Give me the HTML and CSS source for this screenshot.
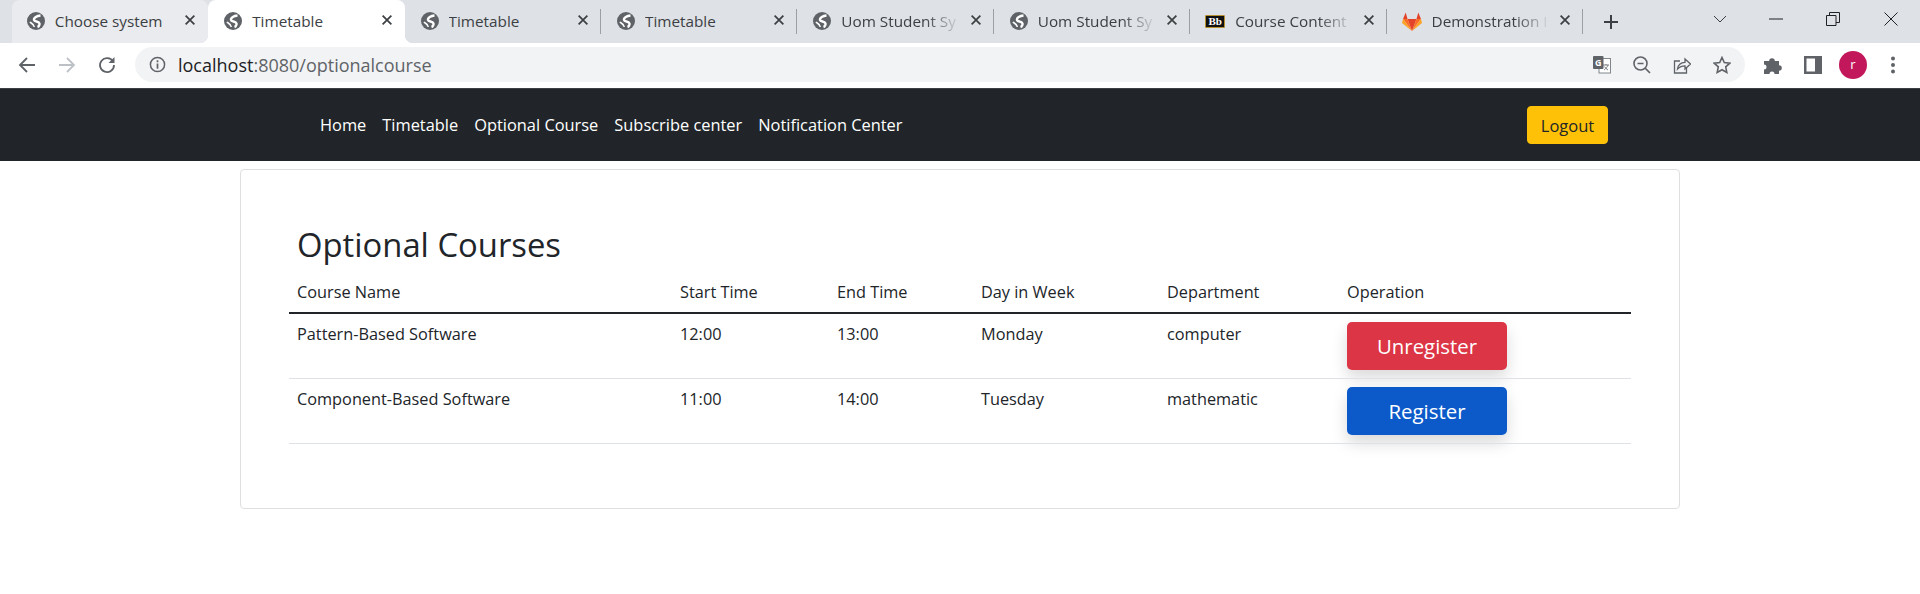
FILE: index.html
```html
<!DOCTYPE html>
<html lang="en">
<head>
    <meta charset="UTF-8">
    <meta name="viewport" content="width=device-width, initial-scale=1.0">
    <title>Timetable</title>
    <link rel="stylesheet" href="styles.css">
</head>
<body>
    <svg class="defs" width="0" height="0">
        <symbol id="globe" viewBox="0 0 18 18">
            <circle cx="9" cy="9" r="9" fill="#5f6368"/>
            <path d="M13.500 3.500C10 3.800 6.500 5.500 7 8c.4 2 5 1 5.500 3.500.2 1-.5 3-2 3.500" stroke="#fff" stroke-width="2.400" fill="none"/>
            <path d="M2.800 10c1.500 1 4 2 4.500 5" stroke="#fff" stroke-width="1.500" fill="none"/>
        </symbol>
        <symbol id="close" viewBox="0 0 16 16">
            <path d="M3 3l10 10M13 3L3 13" stroke="#3c4043" stroke-width="2" fill="none"/>
        </symbol>
    </svg>

    <div class="tab-strip">
        <div class="tab tab-hover">
            <svg class="tab-icon"><use href="#globe"/></svg>
            <span class="tab-title">Choose system</span>
            <svg class="tab-close"><use href="#close"/></svg>
        </div>
        <div class="tab tab-active">
            <svg class="tab-icon"><use href="#globe"/></svg>
            <span class="tab-title">Timetable</span>
            <svg class="tab-close"><use href="#close"/></svg>
        </div>
        <div class="tab tab-sep">
            <svg class="tab-icon"><use href="#globe"/></svg>
            <span class="tab-title">Timetable</span>
            <svg class="tab-close"><use href="#close"/></svg>
        </div>
        <div class="tab tab-sep">
            <svg class="tab-icon"><use href="#globe"/></svg>
            <span class="tab-title">Timetable</span>
            <svg class="tab-close"><use href="#close"/></svg>
        </div>
        <div class="tab tab-sep">
            <svg class="tab-icon"><use href="#globe"/></svg>
            <span class="tab-title tab-fade">Uom Student Sy</span>
            <svg class="tab-close"><use href="#close"/></svg>
        </div>
        <div class="tab tab-sep">
            <svg class="tab-icon"><use href="#globe"/></svg>
            <span class="tab-title tab-fade">Uom Student Sy</span>
            <svg class="tab-close"><use href="#close"/></svg>
        </div>
        <div class="tab tab-sep">
            <span class="bb-icon">Bb</span>
            <span class="tab-title tab-fade">Course Content</span>
            <svg class="tab-close"><use href="#close"/></svg>
        </div>
        <div class="tab tab-sep">
            <svg class="tab-icon fox-icon" viewBox="0 0 20 19">
                <path d="M10 19L5.500 7h9z" fill="#e24329"/>
                <path d="M10 19L5.500 7H1z" fill="#fc6d26"/>
                <path d="M10 19l4.500-12H19z" fill="#fc6d26"/>
                <path d="M10 19L1 7l-1 4z" fill="#fca326"/>
                <path d="M10 19l9-12 1 4z" fill="#fca326"/>
                <path d="M1 7l2.700-6.500L5.500 7z" fill="#e24329"/>
                <path d="M19 7L16.300.5 14.500 7z" fill="#e24329"/>
            </svg>
            <span class="tab-title tab-fade">Demonstration I</span>
            <svg class="tab-close"><use href="#close"/></svg>
        </div>
        <svg class="new-tab" viewBox="0 0 16 16"><path d="M8 1v14M1 8h14" stroke="#3c4043" stroke-width="2"/></svg>
        <div class="window-controls">
            <svg class="tab-list" viewBox="0 0 14 8"><path d="M1 1l6 6 6-6" stroke="#3c4043" fill="none"/></svg>
            <div class="win-btn"><svg viewBox="0 0 14 14"><path d="M0 7h14" stroke="#202124"/></svg></div>
            <div class="win-btn"><svg viewBox="0 0 14 14"><path d="M.5 3.500h9.500v10H.5zM3.500 3.500V.5h10v10H10" stroke="#202124" fill="none"/></svg></div>
            <div class="win-btn"><svg viewBox="0 0 14 14"><path d="M.5.5l13 13M13.500.5l-13 13" stroke="#202124" fill="none"/></svg></div>
        </div>
    </div>

    <div class="toolbar">
        <div class="tool-btn"><svg viewBox="0 0 18 18"><path d="M17 9H2M9 2L2 9l7 7" stroke="#5f6368" stroke-width="1.800" fill="none"/></svg></div>
        <div class="tool-btn"><svg viewBox="0 0 18 18"><path d="M1 9h15M9 2l7 7-7 7" stroke="#bdc1c6" stroke-width="1.800" fill="none"/></svg></div>
        <div class="tool-btn"><svg viewBox="0 0 18 18"><path d="M15 5.500A7 7 0 1 0 16 9" stroke="#5f6368" stroke-width="1.800" fill="none"/><path d="M16.500 1v6h-6z" fill="#5f6368"/></svg></div>
        <div class="omnibox">
            <svg class="info-icon" viewBox="0 0 18 18">
                <circle cx="9" cy="9" r="7.500" stroke="#5f6368" stroke-width="1.600" fill="none"/>
                <path d="M9 8v5.500M9 4.500v2" stroke="#5f6368" stroke-width="1.800"/>
            </svg>
            <div class="url"><span class="url-host">localhost</span>:8080/optionalcourse</div>
            <div class="omni-actions">
                <div class="tool-btn">
                    <svg viewBox="0 0 18 18">
                        <rect x="6" y="2.500" width="11.500" height="14.500" fill="#fff" stroke="#80868b"/>
                        <rect x="0" y="0" width="10.500" height="13" rx="1" fill="#5f6368"/>
                        <text x="5.200" y="10" class="g-letter">G</text>
                        <path d="M10 9h6M13 8v1M15 9c-.5 2-2.500 4-4 5M11.500 10.500c.8 1.500 2 2.500 3.500 3.500" stroke="#5f6368" stroke-width=".8" fill="none"/>
                    </svg>
                </div>
                <div class="tool-btn">
                    <svg viewBox="0 0 18 18">
                        <circle cx="7.500" cy="7.500" r="6.500" stroke="#5f6368" stroke-width="1.600" fill="none"/>
                        <path d="M4.500 7.500h6M12 12l5 5" stroke="#5f6368" stroke-width="1.700" fill="none"/>
                    </svg>
                </div>
                <div class="tool-btn">
                    <svg viewBox="0 0 18 18">
                        <path d="M7 5H1.500v12h12v-5" stroke="#5f6368" stroke-width="1.300" fill="none"/>
                        <path d="M4.500 13c.5-4 3-6.500 7.500-6.700V3l5.500 5-5.500 5V9.800c-3 0-5.500 1-7.500 3.200z" stroke="#5f6368" stroke-width="1.300" fill="none"/>
                    </svg>
                </div>
                <div class="tool-btn">
                    <svg viewBox="0 0 18 18">
                        <path d="M9 1.500l2.300 5.100 5.500.6-4.100 3.700 1.100 5.500L9 13.700l-4.800 2.700 1.100-5.500L1.200 7.200l5.500-.6z" stroke="#5f6368" stroke-width="1.600" fill="none"/>
                    </svg>
                </div>
            </div>
        </div>
        <div class="tool-btn tool-first">
            <svg class="puzzle-icon" viewBox="0 0 20 20"><path d="M1 6h5.200a2.800 2.800 0 1 1 5.600 0H16v4.200a2.800 2.800 0 1 1 0 5.600V19h-4.500a2.500 2.500 0 1 0-5 0H1v-4.500a2.500 2.500 0 1 0 0-5z" fill="#5f6368"/></svg>
        </div>
        <div class="tool-btn">
            <svg viewBox="0 0 18 18"><path fill-rule="evenodd" d="M0 0h18v18H0zM2.500 2.500v13H11v-13z" fill="#5f6368"/></svg>
        </div>
        <div class="tool-btn"><div class="avatar">r</div></div>
        <div class="tool-btn">
            <svg viewBox="0 0 18 18"><circle cx="9" cy="2.500" r="2" fill="#5f6368"/><circle cx="9" cy="9" r="2" fill="#5f6368"/><circle cx="9" cy="15.500" r="2" fill="#5f6368"/></svg>
        </div>
    </div>

    <nav class="navbar">
        <div class="nav-container">
            <div class="nav-links">
                <a class="nav-link">Home</a>
                <a class="nav-link">Timetable</a>
                <a class="nav-link">Optional Course</a>
                <a class="nav-link">Subscribe center</a>
                <a class="nav-link">Notification Center</a>
            </div>
            <button class="logout-btn">Logout</button>
        </div>
    </nav>

    <main class="card">
        <h2 class="card-title">Optional Courses</h2>
        <table class="course-table">
            <colgroup>
                <col class="col-name">
                <col class="col-start">
                <col class="col-end">
                <col class="col-day">
                <col class="col-dept">
                <col class="col-op">
            </colgroup>
            <thead>
                <tr>
                    <th>Course Name</th>
                    <th>Start Time</th>
                    <th>End Time</th>
                    <th>Day in Week</th>
                    <th>Department</th>
                    <th>Operation</th>
                </tr>
            </thead>
            <tbody>
                <tr>
                    <td>Pattern-Based Software</td>
                    <td>12:00</td>
                    <td>13:00</td>
                    <td>Monday</td>
                    <td>computer</td>
                    <td><button class="reg-btn reg-danger">Unregister</button></td>
                </tr>
                <tr>
                    <td>Component-Based Software</td>
                    <td>11:00</td>
                    <td>14:00</td>
                    <td>Tuesday</td>
                    <td>mathematic</td>
                    <td><button class="reg-btn reg-primary">Register</button></td>
                </tr>
            </tbody>
        </table>
    </main>
</body>
</html>
```

FILE: styles.css
```css
* {
    box-sizing: border-box;
}

body {
    margin: 0;
    font-family: "Open Sans", "Noto Sans", sans-serif;
    font-size: 16.3px;
    color: #212529;
    background-color: #fff;
}

.defs {
    display: block;
    height: 0;
}

/* browser chrome */
.tab-strip {
    display: flex;
    height: 43px;
    padding-left: 11.8px;
    background-color: #dee1e6;
}

.tab {
    position: relative;
    flex: none;
    display: flex;
    align-items: center;
    width: 196.4px;
    padding: 0 11px 1px 16px;
    font-size: 15.3px;
    color: #3c4043;
}

.tab-hover {
    padding-left: 15px;
    background-color: #e9ebee;
    border-radius: 8px 8px 0 0;
}

.tab-active {
    background-color: #fff;
    border-radius: 8px 8px 0 0;
    color: #3c4043;
}

.tab-active::before,
.tab-active::after {
    content: "";
    position: absolute;
    bottom: 0;
    width: 8px;
    height: 8px;
}

.tab-active::before {
    left: -8px;
    background: radial-gradient(circle at 0 0, transparent 8px, #fff 8.5px);
}

.tab-active::after {
    right: -8px;
    background: radial-gradient(circle at 100% 0, transparent 8px, #fff 8.5px);
}

.tab-sep::after {
    content: "";
    position: absolute;
    top: 9px;
    right: 0;
    width: 1px;
    height: 25px;
    background-color: #9aa0a6;
}

.tab-icon {
    flex: none;
    width: 18px;
    height: 18px;
}

.fox-icon {
    width: 20px;
    height: 19px;
    margin-left: -1px;
}

.bb-icon {
    flex: none;
    width: 20px;
    height: 13px;
    margin-left: -1px;
    border: 1px solid #b8912f;
    border-radius: 1px;
    background-color: #111;
    color: #fff;
    font-family: "Liberation Serif", serif;
    font-size: 11px;
    font-weight: bold;
    line-height: 11px;
    text-align: center;
}

.tab-title {
    flex: 1;
    min-width: 0;
    margin-left: 10px;
    overflow: hidden;
    white-space: nowrap;
}

.tab-fade {
    -webkit-mask-image: linear-gradient(to right, #000 70%, transparent 100%);
    mask-image: linear-gradient(to right, #000 70%, transparent 100%);
}

.tab-close {
    flex: none;
    width: 14px;
    height: 14px;
    margin-left: 8px;
    margin-bottom: 2px;
}

.new-tab {
    flex: none;
    width: 16px;
    height: 16px;
    margin: 14px 0 0 20px;
}

.window-controls {
    display: flex;
    margin-left: auto;
}

.tab-list {
    width: 14px;
    height: 8px;
    margin: 15px 20px 0 0;
}

.win-btn {
    display: flex;
    justify-content: center;
    width: 57.7px;
    height: 30px;
    padding-top: 12px;
}

.win-btn svg {
    width: 14px;
    height: 14px;
}

.toolbar {
    display: flex;
    align-items: center;
    height: 46px;
    padding: 0 7px 2px;
    border-bottom: 1px solid #3c4043;
    background-color: #fff;
}

.tool-btn {
    flex: none;
    display: flex;
    align-items: center;
    justify-content: center;
    width: 40px;
    height: 35px;
}

.tool-btn svg {
    width: 18px;
    height: 18px;
}

.tool-btn .puzzle-icon {
    width: 20px;
    height: 20px;
}

.tool-first {
    margin-left: 8px;
}

.omnibox {
    flex: 1;
    display: flex;
    align-items: center;
    height: 35px;
    margin-left: 8px;
    padding: 0 3px 0 14px;
    border-radius: 18px;
    background-color: #f1f3f4;
}

.info-icon {
    flex: none;
    width: 17px;
    height: 17px;
}

.url {
    margin-left: 12px;
    font-size: 18px;
    color: #5f6368;
}

.url-host {
    color: #202124;
}

.omni-actions {
    display: flex;
    margin-left: auto;
}

.g-letter {
    font-family: "Open Sans", sans-serif;
    font-size: 9px;
    font-weight: bold;
    fill: #fff;
    text-anchor: middle;
}

.avatar {
    width: 28px;
    height: 28px;
    border-radius: 50%;
    background-color: #c2185b;
    color: #fff;
    font-size: 13px;
    line-height: 27px;
    text-align: center;
}

/* page */
.navbar {
    height: 72px;
    background-color: #212529;
}

.nav-container {
    display: flex;
    align-items: center;
    justify-content: space-between;
    width: 1320px;
    height: 100%;
    margin: 0 auto;
    padding: 0 12px;
}

.nav-links {
    display: flex;
}

.nav-link {
    padding: 8px;
    color: #fff;
    font-size: 16.4px;
    line-height: 24px;
}

.logout-btn {
    width: 81px;
    height: 38px;
    padding: 0;
    border: 1px solid #ffc107;
    border-radius: 4px;
    background-color: #ffc107;
    color: #212529;
    font-family: inherit;
    font-size: 16.5px;
}

.card {
    width: 1440px;
    height: 340px;
    margin: 8px auto 0;
    padding: 56px 48px 0;
    border: 1px solid #dfdfdf;
    border-radius: 4px;
}

.card-title {
    margin: 0 0 8px;
    padding-left: 8px;
    font-size: 32.8px;
    font-weight: 400;
    line-height: 38px;
}

.course-table {
    width: 1342px;
    table-layout: fixed;
    border-collapse: collapse;
}

.col-name { width: 383px; }
.col-start { width: 157px; }
.col-end { width: 144px; }
.col-day { width: 186px; }
.col-dept { width: 180px; }
.col-op { width: 292px; }

.course-table th,
.course-table td {
    padding: 8px;
    font-weight: 400;
    line-height: 24px;
    text-align: left;
    vertical-align: top;
}

.course-table th {
    border-bottom: 2px solid #212529;
}

.course-table td {
    border-bottom: 1px solid #dee2e6;
}

.reg-btn {
    display: block;
    width: 160px;
    height: 48px;
    padding: 0;
    border: none;
    border-radius: 5px;
    box-shadow: 0 8px 16px rgba(0, 0, 0, 0.15);
    color: #fff;
    font-family: inherit;
    font-size: 20.4px;
}

.reg-danger {
    background-color: #dc3545;
}

.reg-primary {
    background-color: #0c5aca;
}
```
